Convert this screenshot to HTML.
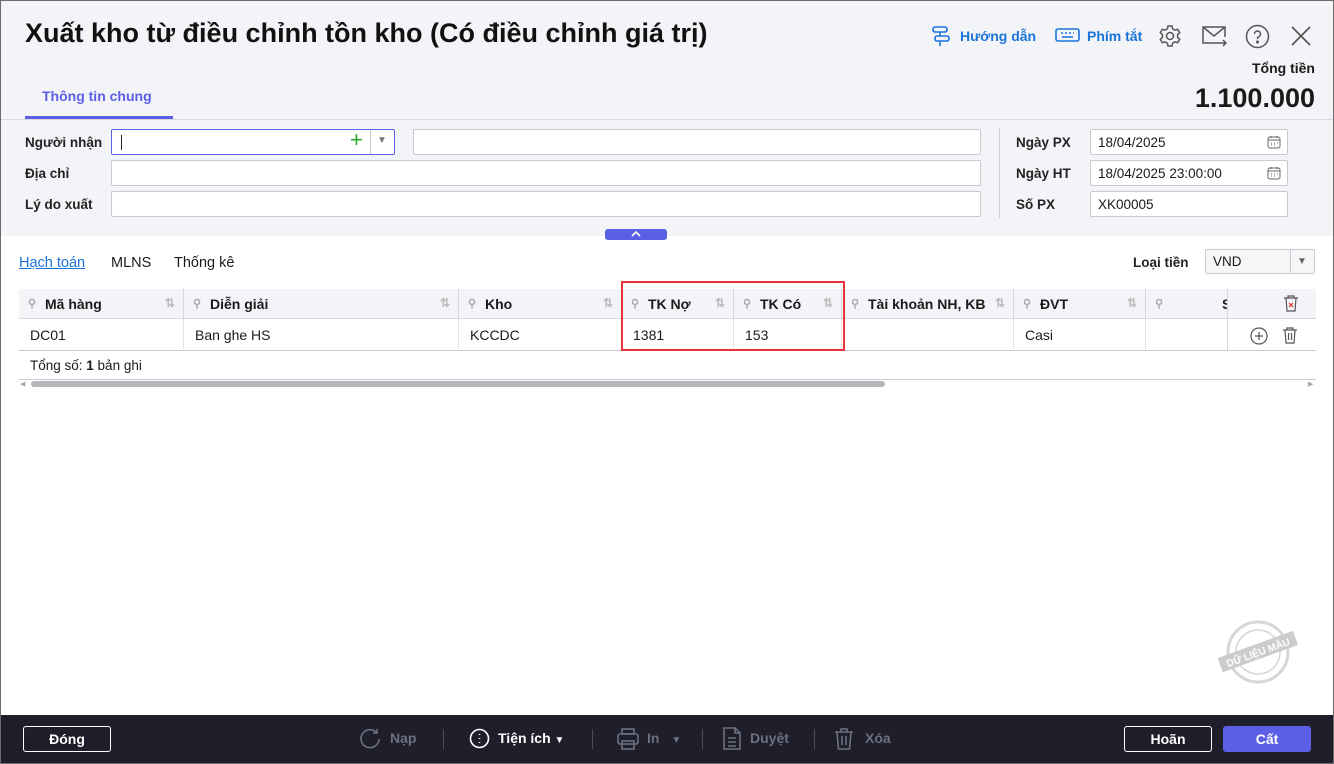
<!DOCTYPE html>
<html><head><meta charset="utf-8"><style>
*{box-sizing:border-box;margin:0;padding:0}
body{width:1334px;height:764px;overflow:hidden;font-family:"Liberation Sans",sans-serif;font-size:14px;color:#1a1a1a;background:#fff;position:relative}
.frame{position:absolute;left:0;top:0;width:1334px;height:764px;border:1px solid #6b6b6b;pointer-events:none;z-index:10}
.hdr{position:absolute;left:0;top:0;width:1334px;height:236px;background:#f3f4f8}
.abs{position:absolute}
.title{left:25px;top:18px;font-size:27px;font-weight:bold;color:#111}
.lnk{color:#1a73d9;font-size:14px;font-weight:bold}
.lbl{font-size:13.5px;font-weight:bold;color:#222}
.inp{position:absolute;height:26px;background:#fff;border:1px solid #c8cad0;border-radius:2px;font-size:13.5px;padding:5px 7px}
.th{position:absolute;top:289px;height:30px;background:#f3f4f8;border-bottom:1px solid #d6d8dd;font-weight:bold;font-size:14px;padding:7px 0 0 26px}
.th .pin{position:absolute;left:9px;top:8px;color:#aaa;font-size:11px}
.th .srt{position:absolute;right:8px;top:7px;color:#bbb;font-size:12px}
.td{position:absolute;top:319px;height:32px;border-bottom:1px solid #c8cad0;border-right:1px dotted #ccc;padding:8px 0 0 11px;font-size:14px}
.foot{position:absolute;left:0;top:715px;width:1334px;height:49px;background:#1e1f2b}
.btn{position:absolute;top:726px;height:26px;border:1px solid #fff;border-radius:3px;color:#fff;font-weight:bold;font-size:14px;text-align:center;line-height:24px}
.fi{position:absolute;top:730px;color:#6e7080;font-weight:bold;font-size:14px}
.sep{position:absolute;top:729px;width:1px;height:20px;background:#4a4c58}
</style></head><body>
<div class="hdr"></div>
<div class="abs title">Xuất kho từ điều chỉnh tồn kho (Có điều chỉnh giá trị)</div>
<svg class="abs" style="left:931px;top:25px" width="20" height="22" viewBox="0 0 20 22" fill="none" stroke="#1a73d9" stroke-width="1.6"><rect x="2" y="2" width="14" height="5" rx="2"/><rect x="4" y="11" width="14" height="5" rx="2"/><path d="M9 7v4M9 16v5"/></svg>
<div class="abs lnk" style="left:960px;top:28px">Hướng dẫn</div>
<svg class="abs" style="left:1055px;top:28px" width="25" height="14" viewBox="0 0 25 14" fill="none" stroke="#1a73d9" stroke-width="1.6"><rect x="1" y="1" width="23" height="12" rx="2"/><path d="M6 5h2M10 5h2M14 5h2M18 5h1M7 9h11" stroke-width="1.4"/></svg>
<div class="abs lnk" style="left:1087px;top:28px">Phím tắt</div>
<svg class="abs" style="left:1158px;top:24px" width="24" height="24" viewBox="0 0 24 24" fill="none" stroke="#555" stroke-width="1.5"><circle cx="12" cy="12" r="3.5"/><path d="M10 2h4l.6 2.8 2.4 1.4 2.7-.9 2 3.4-2.1 1.9v2.8l2.1 1.9-2 3.4-2.7-.9-2.4 1.4L14 22h-4l-.6-2.8-2.4-1.4-2.7.9-2-3.4 2.1-1.9v-2.8L2.3 8.7l2-3.4 2.7.9 2.4-1.4z"/></svg>
<svg class="abs" style="left:1201px;top:24px" width="26" height="24" viewBox="0 0 26 24" fill="none" stroke="#555" stroke-width="1.5"><path d="M17 19H2V3h22v10"/><path d="M2 3l11 9 11-9"/><path d="M17 19h8M22 16l3 3-3 3"/></svg>
<svg class="abs" style="left:1245px;top:24px" width="25" height="25" viewBox="0 0 25 25" fill="none" stroke="#555" stroke-width="1.5"><circle cx="12.5" cy="12.5" r="11"/><path d="M9.5 10a3 3 0 1 1 4 2.8c-1 .4-1 1.2-1 2.2"/><circle cx="12.5" cy="18" r=".8" fill="#555"/></svg>
<svg class="abs" style="left:1291px;top:26px" width="20" height="20" viewBox="0 0 20 20" stroke="#555" stroke-width="1.7"><path d="M1 1l18 18M19 1L1 19"/></svg>
<div class="abs" style="right:19px;top:60px;font-size:14px;font-weight:bold">Tổng tiền</div>
<div class="abs" style="right:19px;top:83px;font-size:27px;font-weight:bold">1.100.000</div>
<div class="abs" style="left:42px;top:88px;color:#5b5fe6;font-weight:bold;font-size:14px">Thông tin chung</div>
<div class="abs" style="left:25px;top:116px;width:148px;height:3px;background:#5b5fe6"></div>
<div class="abs" style="left:0;top:119px;width:1334px;height:1px;background:#d8dadf"></div>

<div class="abs lbl" style="left:25px;top:135px">Người nhận</div>
<div class="abs lbl" style="left:25px;top:166px">Địa chỉ</div>
<div class="abs lbl" style="left:25px;top:197px">Lý do xuất</div>
<div class="inp" style="left:111px;top:129px;width:284px;border-color:#5b5fe6"><span style="display:inline-block;width:1px;height:15px;background:#222;margin-left:2px"></span></div>
<div class="abs" style="left:350px;top:127px;color:#2ca52c;font-size:22px">+</div>
<div class="abs" style="left:370px;top:130px;width:1px;height:24px;background:#c8cad0"></div>
<div class="abs" style="left:377px;top:135px;color:#777;font-size:10px">▼</div>
<div class="inp" style="left:413px;top:129px;width:568px"></div>
<div class="inp" style="left:111px;top:160px;width:870px"></div>
<div class="inp" style="left:111px;top:191px;width:870px"></div>
<div class="abs" style="left:999px;top:128px;width:1px;height:90px;background:#d0d2d8"></div>
<div class="abs lbl" style="left:1016px;top:135px">Ngày PX</div>
<div class="abs lbl" style="left:1016px;top:166px">Ngày HT</div>
<div class="abs lbl" style="left:1016px;top:197px">Số PX</div>
<div class="inp" style="left:1090px;top:129px;width:198px">18/04/2025</div>
<div class="inp" style="left:1090px;top:160px;width:198px">18/04/2025 23:00:00</div>
<div class="inp" style="left:1090px;top:191px;width:198px">XK00005</div>
<svg class="abs" style="left:1267px;top:135px" width="14" height="14" viewBox="0 0 14 14" fill="none" stroke="#666"><rect x="1" y="2" width="12" height="11" rx="2"/><path d="M1 5h12M4 1v2M10 1v2M4 8h1M7 8h1M10 8h1M4 10h1M7 10h1"/></svg>
<svg class="abs" style="left:1267px;top:166px" width="14" height="14" viewBox="0 0 14 14" fill="none" stroke="#666"><rect x="1" y="2" width="12" height="11" rx="2"/><path d="M1 5h12M4 1v2M10 1v2M4 8h1M7 8h1M10 8h1M4 10h1M7 10h1"/></svg>
<div class="abs" style="left:605px;top:229px;width:62px;height:11px;background:#5b5fe6;border-radius:3px"></div>
<svg class="abs" style="left:631px;top:230px" width="10" height="7" viewBox="0 0 10 7" fill="none" stroke="#fff" stroke-width="1.6"><path d="M1 6l4-4 4 4"/></svg>

<div class="abs" style="left:19px;top:255px;color:#1a73d9;text-decoration:underline;font-size:14.5px">Hạch toán</div>
<div class="abs" style="left:111px;top:255px;font-size:14.5px">MLNS</div>
<div class="abs" style="left:174px;top:255px;font-size:14.5px">Thống kê</div>
<div class="abs lbl" style="left:1133px;top:255px">Loại tiền</div>
<div class="inp" style="left:1205px;top:249px;width:110px;background:#f5f6f8;height:25px;padding:4px 7px">VND</div>
<div class="abs" style="left:1290px;top:250px;width:1px;height:23px;background:#c8cad0"></div>
<div class="abs" style="left:1297px;top:256px;color:#666;font-size:10px">▼</div>

<div class="th" style="left:19px;width:165px;border-right:1px solid #d6d8dd"><span class="pin">⚲</span>Mã hàng<span class="srt">⇅</span></div>
<div class="th" style="left:184px;width:275px;border-right:1px solid #d6d8dd"><span class="pin">⚲</span>Diễn giải<span class="srt">⇅</span></div>
<div class="th" style="left:459px;width:163px;border-right:1px solid #d6d8dd"><span class="pin">⚲</span>Kho<span class="srt">⇅</span></div>
<div class="th" style="left:622px;width:112px;border-right:1px solid #d6d8dd"><span class="pin">⚲</span>TK Nợ<span class="srt">⇅</span></div>
<div class="th" style="left:734px;width:108px;border-right:1px solid #d6d8dd"><span class="pin">⚲</span>TK Có<span class="srt">⇅</span></div>
<div class="th" style="left:842px;width:172px;border-right:1px solid #d6d8dd"><span class="pin">⚲</span>Tài khoản NH, KB<span class="srt">⇅</span></div>
<div class="th" style="left:1014px;width:132px;border-right:1px solid #d6d8dd"><span class="pin">⚲</span>ĐVT<span class="srt">⇅</span></div>
<div class="th" style="left:1146px;width:82px;border-right:1px solid #d6d8dd;overflow:hidden"><span class="pin">⚲</span><span style="position:absolute;left:76px">S</span></div>
<div class="th" style="left:1228px;width:88px"></div>
<svg class="abs" style="left:1283px;top:294px" width="16" height="18" viewBox="0 0 16 18" fill="none" stroke="#555" stroke-width="1.2"><path d="M1 4h14M5 4V2h6v2M3 4l1 13h8l1-13"/><path d="M6 9l4 4M10 9l-4 4" stroke="#e03030"/></svg>

<div class="td" style="left:19px;width:165px">DC01</div>
<div class="td" style="left:184px;width:275px">Ban ghe HS</div>
<div class="td" style="left:459px;width:163px">KCCDC</div>
<div class="td" style="left:622px;width:112px">1381</div>
<div class="td" style="left:734px;width:108px">153</div>
<div class="td" style="left:842px;width:172px"></div>
<div class="td" style="left:1014px;width:132px">Casi</div>
<div class="td" style="left:1146px;width:82px;border-right:1px solid #d6d8dd"></div>
<div class="td" style="left:1228px;width:88px;border-right:none"></div>
<svg class="abs" style="left:1250px;top:327px" width="18" height="18" viewBox="0 0 18 18" fill="none" stroke="#555" stroke-width="1.2"><circle cx="9" cy="9" r="8"/><path d="M9 5v8M5 9h8"/></svg>
<svg class="abs" style="left:1282px;top:326px" width="16" height="18" viewBox="0 0 16 18" fill="none" stroke="#555" stroke-width="1.2"><path d="M1 4h14M5 4V2h6v2M3 4l1 13h8l1-13M6.5 7v7M9.5 7v7"/></svg>
<div class="abs" style="left:621px;top:281px;width:224px;height:70px;border:2px solid #e8333a"></div>

<div class="abs" style="left:30px;top:358px;font-size:13.5px">Tổng số: <b>1</b> bản ghi</div>
<div class="abs" style="left:19px;top:379px;width:1297px;height:1px;background:#c8cad0"></div>
<div class="abs" style="left:31px;top:381px;width:854px;height:6px;background:#b5b7bd;border-radius:3px"></div>
<div class="abs" style="left:20px;top:380px;color:#aaa;font-size:7px">◀</div>
<div class="abs" style="left:1308px;top:380px;color:#aaa;font-size:7px">▶</div>

<svg class="abs" style="left:1213px;top:617px" width="90" height="70" viewBox="0 0 90 70"><g fill="none" stroke="#ccc" stroke-width="3" opacity=".8"><circle cx="45" cy="35" r="30"/><circle cx="45" cy="35" r="22" stroke-width="1.5"/></g><g transform="rotate(-20 45 35)"><rect x="5" y="27" width="80" height="15" fill="#ccc"/><text x="45" y="39" font-size="10" font-weight="bold" fill="#fff" text-anchor="middle" font-family="Liberation Sans">DỮ LIỆU MẪU</text></g></svg>

<div class="foot"></div>
<div class="btn" style="left:23px;width:88px">Đóng</div>
<svg class="abs" style="left:359px;top:728px" width="22" height="22" viewBox="0 0 22 22" fill="none" stroke="#6e7080" stroke-width="1.6"><path d="M18 5A9 9 0 1 0 20 11M18 1v4h-4"/></svg>
<div class="fi" style="left:390px">Nạp</div>
<div class="sep" style="left:443px"></div>
<svg class="abs" style="left:469px;top:728px" width="21" height="21" viewBox="0 0 21 21" fill="none" stroke="#fff" stroke-width="1.6"><circle cx="10.5" cy="10.5" r="9"/><path d="M10.5 6v1M10.5 10v1M10.5 14v1"/></svg>
<div class="fi" style="left:498px;color:#fff">Tiện ích <span style="font-size:10px">▼</span></div>
<div class="sep" style="left:592px"></div>
<svg class="abs" style="left:617px;top:728px" width="22" height="22" viewBox="0 0 22 22" fill="none" stroke="#6e7080" stroke-width="1.6"><rect x="5" y="1" width="12" height="5"/><rect x="1" y="6" width="20" height="10" rx="2"/><rect x="5" y="13" width="12" height="8"/></svg>
<div class="fi" style="left:647px">In <span style="font-size:10px;margin-left:8px">▼</span></div>
<div class="sep" style="left:702px"></div>
<svg class="abs" style="left:723px;top:727px" width="18" height="23" viewBox="0 0 18 23" fill="none" stroke="#6e7080" stroke-width="1.6"><path d="M1 1h11l5 5v16H1zM12 1v5h5M5 11h8M5 15h8M5 19h8"/></svg>
<div class="fi" style="left:750px">Duyệt</div>
<div class="sep" style="left:814px"></div>
<svg class="abs" style="left:834px;top:727px" width="20" height="23" viewBox="0 0 20 23" fill="none" stroke="#6e7080" stroke-width="1.6"><path d="M1 5h18M7 5V2h6v3M3 5l1.5 17h11L17 5M8 9v9M12 9v9"/></svg>
<div class="fi" style="left:865px">Xóa</div>
<div class="btn" style="left:1124px;width:88px">Hoãn</div>
<div class="btn" style="left:1223px;width:88px;background:#5b5fe6;border-color:#5b5fe6">Cất</div>
<div class="frame"></div>
</body></html>
